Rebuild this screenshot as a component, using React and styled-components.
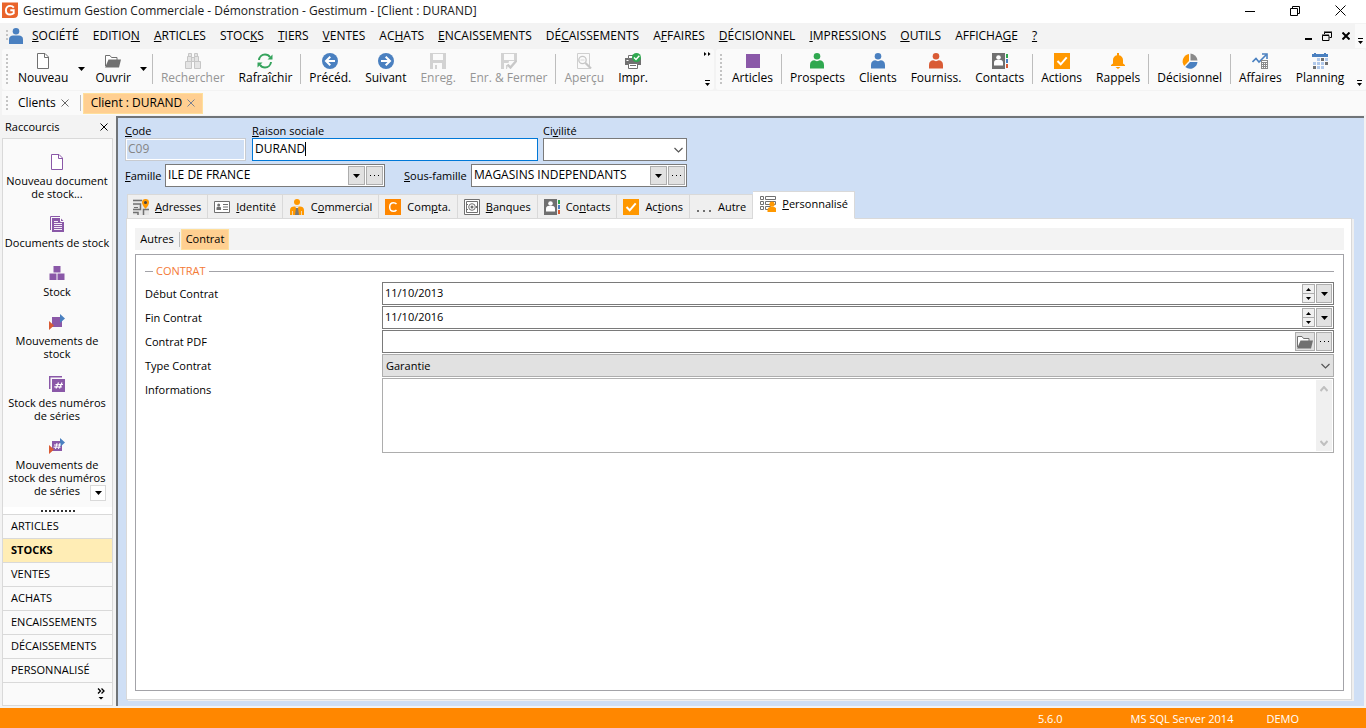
import React from 'react';
import styled, { createGlobalStyle, css } from 'styled-components';

const c = {
  blue: '#cfdff5', bar: '#f3f3f3', panel: '#fafafa', line: '#d9d9d9', gray: '#707070',
  orange: '#ff9800', iconBlue: '#4a80c0', purple: '#8a58a8', green: '#2fa84f', red: '#d95b35',
};

const Global = createGlobalStyle`
  *, *::before, *::after { box-sizing: border-box; }
  body { margin: 0; background: ${c.bar}; }
  body, button, input, select, textarea {
    font-family: "Open Sans", "Noto Sans", sans-serif;
    font-size: 11px; line-height: 16px; color: #000;
  }
  button, input, select, textarea { margin: 0; padding: 0; border-radius: 0; outline: 0; }
  button { border: 0; background: none; white-space: nowrap; }
  svg { display: block; flex: none; }
`;

const Page = styled.div`
  min-height: 100vh; display: flex; flex-direction: column; background: ${c.bar};
`;

/* ---------- window frame ---------- */
const TitleBar = styled.header`
  height: 23px; background: #fff; display: flex; align-items: center; gap: 5px; padding: 0 20px 2px 2px;
  font-size: 12px; color: #1a1a1a;
`;
const Title = styled.h1`margin: 0; font: inherit; flex: 1;`;
const WindowButtons = styled.div`
  display: flex; gap: ${p => p.$gap}px; align-items: center;
`;
const MenuBar = styled.nav`height: 26px; display: flex; align-items: center; padding-left: 6px;`;
const Grip = styled.span`
  width: 2px; height: ${p => p.$h}px; flex: none;
  background: repeating-linear-gradient(#c4c4c4 0 2px, transparent 2px 4px);
`;
const MenuItem = styled.button`font-size: 12px; padding: 0 7px; height: 22px;`;
const MenuList = styled.div`display: flex; flex: 1; padding-left: 1px;`;
const MenuOverflow = styled.button`
  width: 11px; height: 24px; margin-left: 5px; padding: 10px 0 0 2px; background: ${c.panel};
`;

/* ---------- tool bars ---------- */
const ToolBars = styled.div`display: grid; grid-template-columns: 712px 1fr; gap: 2px; padding-left: 2px; height: 41px;`;
const ToolBar = styled.div`
  display: flex; align-items: center; background: ${c.panel}; border-radius: 3px; padding: 0 2px 1px 4px;
`;
const Tools = styled.div`display: flex; flex: 1; align-items: center; padding-left: 3px;`;
const Tool = styled.button`
  display: flex; flex-direction: column; align-items: center; padding: 2px 7px 0; height: 36px; gap: 1px;
  font-size: 12px;
  &:disabled { color: #959595; }
`;
const ToolDrop = styled.button`width: 12px; height: 36px; margin-right: 1px; display: grid; place-items: center;`;
const Sep = styled.span`width: 1px; height: ${p => p.$h || 30}px; background: #bdbdbd; margin: 0 1px; flex: none;`;
const Overflow = styled.button`
  width: 9px; height: 34px; display: flex; flex-direction: column; justify-content: space-between; align-items: center;
`;

/* ---------- document tabs ---------- */
const DocTabs = styled.div`
  height: 24px; margin: 1px 0 0 2px; padding: 0 0 0 4px; display: flex; align-items: center; gap: 1px;
  background: ${c.panel};
`;
const DocTab = styled.div`
  display: flex; align-items: center; gap: 5px; height: 21px; padding: 0 9px;
  ${p => p.$active && css`background: #ffcf91; border: 1px solid #ffdf9c; padding: 0 7px;`}
  button { font-size: 12px; }
`;

/* ---------- body ---------- */
const Body = styled.div`flex: 1; display: flex; min-height: 0;`;
const Side = styled.aside`width: 115px; flex: none; padding: 0 2px 2px; display: flex; flex-direction: column;`;
const SideHead = styled.div`
  height: 23px; display: flex; align-items: center; justify-content: space-between; padding: 0 5px 0 3px;
`;
const SideBox = styled.div`
  flex: 1; display: flex; flex-direction: column; border: 1px solid ${c.line}; background: ${c.panel};
`;
const Shortcuts = styled.div`position: relative; flex: 1; padding-top: 15px;`;
const Shortcut = styled.button`
  width: 100%; display: flex; flex-direction: column; align-items: center; gap: 4px;
  padding: 0 1px 16px 0; line-height: 13px; white-space: pre; text-align: center;
  &:nth-of-type(6) { padding-bottom: 0; }
`;
const ScrollDown = styled.button`
  position: absolute; right: 6px; bottom: 6px; width: 16px; height: 16px; background: #fff;
  border: 1px solid ${c.line}; display: grid; place-items: center;
`;
const Handle = styled.div`
  height: 7px; background: #fff; display: grid; place-items: center;
  &::before {
    content: ''; width: 34px; height: 2px;
    background: repeating-linear-gradient(90deg, #333 0 2px, transparent 2px 4px);
  }
`;
const SideLink = styled.button`
  height: 24px; padding: 0 8px 2px; text-align: left; border-top: 1px solid ${c.line};
  ${p => p.$active && css`background: #ffedb5; font-weight: 700;`}
`;
const SideMore = styled.button`
  height: 23px; border-top: 1px solid ${c.line}; display: flex; justify-content: flex-end;
  align-items: center; padding-right: 7px;
`;
const Main = styled.main`
  flex: 1; min-width: 0; margin: 1px 2px 2px 1px; padding: 6px 10px 6px 7px; background: ${c.blue};
  border: solid #707478; border-width: 2px 0 0 2px; display: flex; flex-direction: column;
`;

/* ---------- fields ---------- */
const Stack = styled.div`display: flex; flex-direction: column; gap: 1px; width: ${p => p.$w}px;`;
const Label = styled.label`line-height: ${p => p.$lh || 13}px; white-space: nowrap;`;
const Box = styled.div`
  position: relative; display: flex; align-items: center; gap: 1px; height: 23px; padding: 0 1px 0 0;
  width: ${p => (p.$w ? p.$w + 'px' : '100%')};
  border: 1px solid ${p => (p.$focus ? '#0078d7' : '#7a7a7a')}; background: #fff;
  ${p => p.$disabled && css`background: ${c.blue}; border-color: #c8cbd0; box-shadow: inset 0 0 0 1px #fff;`}
`;
const Input = styled.input`
  flex: 1; min-width: 0; height: 19px; border: 0; background: none; padding: 0 0 2px 2px;
  font-size: ${p => (p.$size || 12)}px;
  &:disabled { color: #858585; }
`;
const Caret = styled.span`position: absolute; left: 52px; top: 3px; width: 1px; height: 14px; background: #000;`;
const SmallBtn = styled.button`
  width: ${p => p.$w || 17}px; height: 19px; border: 1px solid #adadad; background: #e1e1e1;
  display: grid; place-items: center; flex: none;
`;
const Spin = styled.div`
  display: flex; flex-direction: column; width: 13px;
  button { height: 10px; border: 1px solid #adadad; background: #f0f0f0; display: grid; place-items: center; }
  button + button { margin-top: -1px; }
`;
const Select = styled.select`
  appearance: none; width: 100%; height: 23px; padding: 0 24px 0 3px;
  border: 1px solid ${p => (p.$gray ? '#adadad' : '#7a7a7a')};
  background: ${p => (p.$gray ? '#e1e1e1' : '#fff')};
`;
const SelectWrap = styled.div`
  position: relative;
  svg { position: absolute; right: 4px; top: 9px; pointer-events: none; }
`;
const TopRow = styled.div`display: flex; gap: ${p => p.$gap}px;`;
const SecondRow = styled.div`display: flex; align-items: center; margin-top: 3px; gap: 19px;`;
const Pair = styled.div`display: flex; align-items: center; justify-content: space-between; width: ${p => p.$w}px;`;

/* ---------- page tabs ---------- */
const PageTabs = styled.div`display: flex; align-items: flex-end; margin: 4px 0 -1px 2px; height: 28px; z-index: 1;`;
const PageTab = styled.button`
  display: flex; align-items: center; gap: 6px; height: 25px; padding: 0 6px; background: #efefef;
  border: 1px solid ${c.line}; border-left-width: 0;
  &:first-child { border-left-width: 1px; padding-left: 5px; }
  ${p => p.$active && css`background: #fff; height: 28px; border-bottom-color: #fff; padding: 0 6px 3px 7px;`}
`;
const Pane = styled.section`
  flex: 1; display: flex; flex-direction: column; background: #fff; padding: 9px 7px 8px 8px; margin: 0 2px 0 1px;
  border: 1px solid ${c.line}; box-shadow: 2px 1px 0 #efefef;
`;
const SubTabs = styled.div`height: 22px; background: ${c.bar}; display: flex; align-items: center; padding-left: 1px;`;
const SubTab = styled.button`
  height: 21px; padding: 0 3px; min-width: ${p => (p.$active ? 48 : 42)}px; font-size: 11px;
  ${p => p.$active && css`background: #ffcf91; border: 1px solid #ffdf9c;`}
`;
const Frame = styled.div`flex: 1; margin-top: 4px; border: 1px solid #a3a3a8; padding: 9px;`;
const Group = styled.fieldset`border: 0; margin: 0; padding: 0; min-width: 0;`;
const Legend = styled.legend`
  width: 100%; padding: 0; display: flex; align-items: center; gap: 3px; color: #f47a36; line-height: 14px;
  &::before { content: ''; width: 8px; height: 1px; background: #a3a3a8; }
  &::after { content: ''; flex: 1; height: 1px; background: #a3a3a8; }
`;
const Fields = styled.div`display: flex; flex-direction: column; gap: 1px; margin-top: 4px;`;
const Row = styled.div`display: grid; grid-template-columns: 237px 1fr; align-items: start;`;
const Notes = styled.div`display: flex; height: 75px; border: 1px solid #adadad; padding: 1px; background: #fff;`;
const TextArea = styled.textarea`flex: 1; border: 0; resize: none; overflow: hidden; background: none;`;
const ScrollTrack = styled.div`
  width: 16px; background: #f0f0f0; display: flex; flex-direction: column; justify-content: space-between;
  align-items: center; padding: 6px 0 5px;
`;
const Status = styled.footer`
  height: 20px; background: #ff8700; color: #fff; display: flex; align-items: center; justify-content: flex-end;
  padding: 2px 67px 0 0; gap: 33px;
`;
const Version = styled.span`margin-right: 35px;`;

/* ---------- icons ---------- */
const Svg = ({ w = 16, h = 16, children }) => (
  <svg width={w} height={h} viewBox={`0 0 ${w} ${h}`} fill="none" aria-hidden="true">{children}</svg>
);
const Down = ({ color = '#000' }) => <Svg w={7} h={4}><path d="M0 0h7L3.5 4z" fill={color} /></Svg>;
const TinyArrow = ({ up }) => <Svg w={5} h={3}><path d={up ? 'M0 3h5L2.5 0z' : 'M0 0h5L2.5 3z'} fill="#000" /></Svg>;
const OverflowMark = () => <Svg w={7} h={6}><path d="M1 0h5v1H1zM1 3h5L3.5 6z" fill="#000" /></Svg>;
const DoubleTip = () => <Svg w={7} h={4}><path d="M0 0l2.5 2L0 4zM4 0l2.500 2L4 4z" fill="#000" /></Svg>;
const Chevron = ({ up, color = '#555', w = 9 }) => (
  <Svg w={w} h={6}><path d={up ? `M.5 5L${w / 2} 1l${w / 2 - .5} 4` : `M.5 1L${w / 2} 5l${w / 2 - .5} -4`} stroke={color} strokeWidth={up || color !== '#555' ? 2 : 1.2} /></Svg>
);
const Cross = ({ s = 8, color = '#666', sw = 1 }) => <Svg w={s} h={s}><path d={`M.5 .5l${s - 1} ${s - 1}M${s - .5} .5l-${s - 1} ${s - 1}`} stroke={color} strokeWidth={sw} /></Svg>;
const Dots = () => <Svg w={9} h={2}><path d="M0 0h1v1H0zM4 0h1v1H4zM8 0h1v1H8z" fill="#000" /></Svg>;
const Logo = () => (
  <Svg w={16} h={17}>
    <path d="M0 .5h16v11c0 3-1.500 4.500-4.500 4.500H0z" fill="#e9642b" />
    <path d="M11.800 5.600C10.900 4.400 9.700 3.900 8.200 3.900 5.600 3.900 3.900 5.700 3.900 8.200s1.700 4.300 4.300 4.300c1.300 0 2.600-.4 3.500-1.200V8.200H8.300" stroke="#fff" strokeWidth="1.900" />
  </Svg>
);
const Person = ({ color = c.iconBlue, tall }) => (
  <Svg><circle cx="8" cy="3.300" r="3.300" fill={color} /><path d={tall ? 'M1 16v-4.500C1 8.500 3 7.500 5 7.500h6c2 0 4 1 4 4V16z' : 'M1 15.500V12C1 8.800 3 7.300 5.300 7.300L8 8.300l2.700-1C13 7.300 15 8.800 15 12v3.500z'} fill={color} /></Svg>
);
const NewDoc = ({ color = c.gray }) => (
  <Svg><path d="M2.500 .5h7.500l3.500 3.500v11.500h-11z" stroke={color} fill="#fff" /><path d="M9.500 .5v4h4" stroke={color} /></Svg>
);
const Folder = () => (
  <Svg><path d="M.5 13V2.500h4.500l1.500 2h5.500V7" stroke={c.gray} fill="#fff" /><path d="M0 14.500L3.500 6.500H16l-2 8z" fill={c.gray} /></Svg>
);
const Binoculars = () => (
  <Svg><g fill="#e4e4e4" stroke="#c6c6c6"><path d="M3.500 .5h3v3h-3zM9.500 .5h3v3h-3zM2.500 3.500h4v5h-4zM9.500 3.500h4v5h-4zM6.500 4.500h3v4h-3zM.5 8.500h6v7h-6zM9.500 8.500h6v7h-6z" /></g></Svg>
);
const Refresh = () => (
  <Svg>
    <path d="M2 7c.3-3 2.700-5.500 6-5.500 2.200 0 4 1 5 2.700M14 9c-.3 3-2.700 5.500-6 5.500-2.200 0-4-1-5-2.700" stroke="#35a35c" strokeWidth="2" />
    <path d="M15.500 1.500v5h-5zM.5 14.500v-5h5z" fill="#35a35c" />
  </Svg>
);
const RoundArrow = ({ right }) => (
  <Svg><circle cx="8" cy="8" r="8" fill={c.iconBlue} />
    <g transform={right ? 'matrix(-1 0 0 1 16 0)' : undefined} stroke="#fff" strokeWidth="2"><path d="M13 8H4.500M8.300 3.800L4 8l4.300 4.200" /></g></Svg>
);
const Floppy = ({ check }) => (
  <Svg><path d="M0 0h16v16H0z" fill="#d2d2d2" /><path d="M3 1h10v6H3zM3 10h9v6H3z" fill="#fafafa" /><path d="M5 12h2v4H5z" fill="#d2d2d2" />
    {check && <><path d="M8 8h8v8H6z" fill="#fafafa" /><path d="M6.500 11.500l3 3L15.500 7.500" stroke="#c8c8c8" strokeWidth="2.400" /></>}</Svg>
);
const Preview = () => (
  <Svg><path d="M1.500 .5h12v15h-12z" stroke="#cfcfcf" /><circle cx="6.500" cy="7" r="3.700" stroke="#c6c6c6" strokeWidth="1.300" /><path d="M4.500 7h4" stroke="#d8d8d8" /><path d="M9.500 10l5.500 5.500" stroke="#c6c6c6" strokeWidth="2.200" /></Svg>
);
const Printer = () => (
  <Svg>
    <path d="M0 5h16v7H0z" fill={c.gray} /><path d="M3.500 2.500h5v3h-5z" stroke={c.gray} fill="#fff" />
    <path d="M3.500 10.500h9v5h-9z" stroke={c.gray} fill="#fff" /><path d="M5 12.500h6" stroke={c.gray} /><path d="M1.500 7h2v1h-2z" fill="#fff" />
    <circle cx="11.500" cy="4.500" r="4.500" fill={c.green} /><path d="M9 4.500l2 2 3.300-3.800" stroke="#fff" strokeWidth="1.400" />
  </Svg>
);
const Square = () => <Svg><path d="M1 1h14v14H1z" fill={c.purple} /></Svg>;
const ContactBook = () => (
  <Svg>
    <path d="M0 0h13v16H0z" fill={c.gray} /><circle cx="6.500" cy="4.500" r="2.300" fill="#fff" /><path d="M2 12.500V9.500C2 7.500 3.500 7 5 7h3c1.500 0 3 .5 3 2.500v3z" fill="#fff" />
    <path d="M14 1h2v4h-2z" fill={c.green} /><path d="M14 6h2v4h-2z" fill={c.iconBlue} /><path d="M14 11h2v4h-2z" fill={c.red} />
  </Svg>
);
const CheckBoxIcon = () => <Svg><path d="M0 0h16v16H0z" fill={c.orange} /><path d="M3.500 8l3.200 3.300 6-7" stroke="#fff" strokeWidth="2" /></Svg>;
const Bell = () => (
  <Svg><path d="M7 0h2v2.200c2.500.5 4 2.300 4 4.800v3.500l2 1.500v1H1v-1l2-1.500V7c0-2.500 1.500-4.300 4-4.800zM5.500 14h5L8 16z" fill={c.orange} /></Svg>
);
const Pie = () => (
  <Svg><path d="M7 1v7L2.200 13A7.500 7.500 0 0 1 7 1z" fill={c.orange} /><path d="M8.500 .5A7.500 7.500 0 0 1 15.500 7.500h-7z" fill="#8a8a8a" /><path d="M15.500 9A7.500 7.500 0 0 1 3.300 14L8 9z" fill={c.iconBlue} /></Svg>
);
const Deals = () => (
  <Svg>
    <path d="M.5 9L4 5.500l3 3.500L14.500 1.500" stroke={c.iconBlue} strokeWidth="1.600" /><path d="M10 1h5v5" stroke={c.iconBlue} strokeWidth="1.600" />
    <path d="M9 7h7v9H9z" fill="#8a8a8a" /><path d="M10 8h5v1h-5zM10 10h1v1h-1zM12 10h1v1h-1zM14 10h1v1h-1zM10 12h1v1h-1zM12 12h1v1h-1zM14 12h1v1h-1zM10 14h1v1h-1zM12 14h1v1h-1zM14 14h1v1h-1z" fill="#fff" />
  </Svg>
);
const Calendar = () => (
  <Svg>
    <path d="M0 1h2V0h2v1h8V0h2v1h2v3H0z" fill={c.iconBlue} />
    <path d="M5 5h3v3H5zM13 5h3v3h-3zM1 9h3v3H1zM5 9h3v3H5zM9 9h3v3H9zM5 13h3v3H5zM9 13h3v3H9z" fill="#b0c8ea" />
    <path d="M9 5h3v3H9zM13 9h3v3h-3zM1 13h3v3H1z" fill={c.gray} />
  </Svg>
);
const Docs = () => (
  <Svg>
    <path d="M1.500 14V.5H11" stroke={c.purple} /><path d="M3 2h8.500L15 5.500V16H3z" fill={c.purple} />
    <path d="M11.500 2v3.500H15" stroke="#fff" /><path d="M5 5.500h4M5 7.500h8M5 9.500h8M5 11.500h8M5 13.500h8" stroke="#fff" strokeWidth=".9" />
  </Svg>
);
const Blocks = () => <Svg><path d="M4.500 1h7v6.500h-7zM.5 8.500h7V15h-7zM8.500 8.500h7V15h-7z" fill={c.purple} /></Svg>;
const Moves = ({ hash }) => (
  <Svg>
    <path d="M3 3h10v10H3z" fill={c.purple} /><path d="M0 7l5 4.500L0 16z" fill={c.red} /><path d="M11 0l5 4.500L11 9z" fill={c.iconBlue} />
    {hash && <path d="M6.500 11L8 5M9.500 11L11 5M5 7h7M4.500 9.200h7" stroke="#fff" />}
  </Svg>
);
const Series = () => (
  <Svg><path d="M.5 13V.5H13" stroke={c.purple} strokeWidth="2" /><path d="M3 3h13v13H3z" fill={c.purple} /><path d="M7 12.500l2.500-6M10.500 12.500l2.500-6M6.500 8.500h7.500M5.300 10.800h7.500" stroke="#fff" strokeWidth="1.200" /></Svg>
);
const MapPin = () => (
  <Svg>
    <path d="M0 0h16v16H0z" fill="#e6e6e6" /><path d="M0 1.500h9M0 5h7.500v5.500H0M10.500 16v-5.500H16M5 16v-2.500H0" stroke={c.gray} strokeWidth="1.500" /><path d="M1 8h4v1H1z" fill={c.gray} />
    <path d="M12.500 0A3.500 3.500 0 0 1 16 3.500C16 6 12.500 10 12.500 10S9 6 9 3.500A3.500 3.500 0 0 1 12.500 0z" fill={c.orange} /><circle cx="12.500" cy="3.500" r="1.500" fill="#444" />
  </Svg>
);
const IdCard = () => (
  <Svg>
    <path d="M.5 2.500h15v11H.5z" fill="#fff" stroke={c.gray} /><circle cx="4.700" cy="6" r="1.500" fill={c.gray} /><path d="M2.500 11V9c0-1 1-1.200 2.200-1.200S7 8 7 9v2z" fill={c.gray} />
    <path d="M9 5.500h5M9 8h5M9 10.500h5" stroke={c.gray} />
  </Svg>
);
const SalesMan = () => (
  <Svg><circle cx="8" cy="3" r="3" fill={c.orange} /><path d="M1 16v-5c0-2.500 2-3.500 4-3.500h6c2 0 4 1 4 3.500v5z" fill={c.orange} /><path d="M6 7.500h4L8 10z" fill="#efefef" /><path d="M7 9h2l1 7H6z" fill="#777" /><path d="M3.500 12v4M12.500 12v4" stroke="#efefef" strokeWidth=".7" /></Svg>
);
const LetterC = () => <Svg><path d="M0 0h16v16H0z" fill="#ff8700" /><path d="M11.500 5C10.700 4.100 9.700 3.700 8.600 3.700 6.200 3.700 4.700 5.500 4.700 8s1.500 4.300 3.900 4.300c1.100 0 2.100-.4 2.900-1.300" stroke="#fff" strokeWidth="1.500" /></Svg>;
const Safe = () => (
  <Svg><path d="M.5 .5h15v15H.5zM2.500 2.500h11v11h-11z" fill="#fff" stroke={c.gray} /><circle cx="8" cy="8" r="3.300" stroke={c.gray} /><circle cx="8" cy="8" r="1.500" fill={c.gray} /><path d="M3 5h1v1H3zM3 10h1v1H3zM12 7h1v2h-1z" fill={c.gray} /></Svg>
);
const More = () => <Svg><path d="M1 11h2v2H1zM7 11h2v2H7zM13 11h2v2h-2z" fill={c.gray} /></Svg>;
const CustomForm = () => (
  <Svg>
    <path d="M.5 .5h3v3h-3zM5.500 .5h10v3h-10zM.5 5.500h3v3h-3zM5.500 5.500h10v3h-10zM.5 10.500h3v3h-3zM5.500 10.500h5v3h-5z" stroke={c.gray} />
    <circle cx="12" cy="8.200" r="2.600" fill={c.orange} /><path d="M7.500 16v-2c0-2 1.500-3 3-3h3c1.500 0 3 1 3 3v2z" fill={c.orange} />
  </Svg>
);
const Restore = ({ bold }) => (
  <Svg w={10} h={10}><path d={bold ? 'M2.500 3V1.500H9.500V6.500H7.500M.5 4.500h6.500v5H.5zM2 1h8M0 4h7' : 'M2.500 2.500v-2h7v7h-2M.5 2.500h7v7h-7z'} stroke="#000" /></Svg>
);

/* Caption whose character at `at` is the keyboard mnemonic */
const Key = ({ text, at }) => (at < 0 ? <span>{text}</span> : <span>{text.slice(0, at)}<u>{text[at]}</u>{text.slice(at + 1)}</span>);

const menus = [['SOCIÉTÉ', 0], ['EDITION', 6], ['ARTICLES', 0], ['STOCKS', 4], ['TIERS', 0], ['VENTES', 0], ['ACHATS', 2],
  ['ENCAISSEMENTS', 0], ['DÉCAISSEMENTS', 2], ['AFFAIRES', 1], ['DÉCISIONNEL', 0], ['IMPRESSIONS', 0], ['OUTILS', 0], ['AFFICHAGE', 7], ['?', 0]];

const editTools = [
  { t: 'Nouveau', i: <NewDoc />, drop: true }, { t: 'Ouvrir', i: <Folder />, drop: true }, null,
  { t: 'Rechercher', i: <Binoculars />, off: true }, { t: 'Rafraîchir', i: <Refresh /> }, null,
  { t: 'Précéd.', i: <RoundArrow /> }, { t: 'Suivant', i: <RoundArrow right /> }, { t: 'Enreg.', i: <Floppy />, off: true },
  { t: 'Enr. & Fermer', i: <Floppy check />, off: true }, null,
  { t: 'Aperçu', i: <Preview />, off: true }, { t: 'Impr.', i: <Printer /> },
];
const navTools = [
  { t: 'Articles', i: <Square /> }, null, { t: 'Prospects', i: <Person color={c.green} /> }, { t: 'Clients', i: <Person /> },
  { t: 'Fourniss.', i: <Person color={c.red} /> }, { t: 'Contacts', i: <ContactBook /> }, null, { t: 'Actions', i: <CheckBoxIcon /> },
  { t: 'Rappels', i: <Bell /> }, null, { t: 'Décisionnel', i: <Pie /> }, null, { t: 'Affaires', i: <Deals /> }, { t: 'Planning', i: <Calendar /> },
];
const shortcuts = [
  ['Nouveau document\nde stock...', <NewDoc color={c.purple} />], ['Documents de stock', <Docs />], ['Stock', <Blocks />],
  ['Mouvements de\nstock', <Moves />], ['Stock des numéros\nde séries', <Series />], ['Mouvements de\nstock des numéros\nde séries', <Moves hash />],
];
const sections = ['ARTICLES', 'STOCKS', 'VENTES', 'ACHATS', 'ENCAISSEMENTS', 'DÉCAISSEMENTS', 'PERSONNALISÉ'];
const pageTabs = [['Adresses', 0, <MapPin />], ['Identité', 0, <IdCard />], ['Commercial', 1, <SalesMan />], ['Compta.', 3, <LetterC />],
  ['Banques', 0, <Safe />], ['Contacts', 2, <ContactBook />], ['Actions', 2, <CheckBoxIcon />], ['Autre', -1, <More />], ['Personnalisé', 0, <CustomForm />]];

const ToolGroup = ({ items }) => (
  <Tools>
    {items.map((x, n) => (x === null ? <Sep key={n} /> : (
      <React.Fragment key={n}>
        <Tool disabled={x.off}>{x.i}<span>{x.t}</span></Tool>
        {x.drop && <ToolDrop aria-label={x.t + ' : options'}><Down /></ToolDrop>}
      </React.Fragment>
    )))}
  </Tools>
);

const LookupField = ({ id, w, value }) => (
  <Box $w={w}>
    <Input id={id} defaultValue={value} />
    <SmallBtn aria-label="Liste"><Down /></SmallBtn>
    <SmallBtn aria-label="Parcourir"><Dots /></SmallBtn>
  </Box>
);

const DateField = ({ id, label, value }) => (
  <Row>
    <Label htmlFor={id} $lh={23}>{label}</Label>
    <Box>
      <Input id={id} defaultValue={value} $size={11} />
      <Spin><button aria-label="Plus"><TinyArrow up /></button><button aria-label="Moins"><TinyArrow /></button></Spin>
      <SmallBtn $w={16} aria-label="Calendrier"><Down /></SmallBtn>
    </Box>
  </Row>
);

export default function App() {
  return (
    <Page>
      <Global />
      <TitleBar>
        <Logo />
        <Title>Gestimum Gestion Commerciale - Démonstration - Gestimum - [Client : DURAND]</Title>
        <WindowButtons $gap={35}>
          <button aria-label="Réduire"><Svg w={10} h={10}><path d="M0 5.500h10" stroke="#000" /></Svg></button>
          <button aria-label="Restaurer"><Restore /></button>
          <button aria-label="Fermer"><Cross s={11} color="#000" /></button>
        </WindowButtons>
      </TitleBar>

      <MenuBar>
        <Grip $h={12} />
        <Person tall />
        <MenuList>{menus.map(([t, at]) => <MenuItem key={t}><Key text={t} at={at} /></MenuItem>)}</MenuList>
        <WindowButtons $gap={10}>
          <button aria-label="Réduire le document"><Svg w={7} h={10}><path d="M0 8h7" stroke="#000" strokeWidth="2" /></Svg></button>
          <button aria-label="Restaurer le document"><Restore bold /></button>
          <button aria-label="Fermer le document"><Cross s={8} color="#000" sw={2} /></button>
        </WindowButtons>
        <MenuOverflow aria-label="Options du menu"><OverflowMark /></MenuOverflow>
      </MenuBar>

      <ToolBars>
        <ToolBar>
          <Grip $h={30} /><ToolGroup items={editTools} />
          <Overflow aria-label="Autres boutons"><DoubleTip /><OverflowMark /></Overflow>
        </ToolBar>
        <ToolBar>
          <Grip $h={30} /><ToolGroup items={navTools} />
          <Overflow aria-label="Autres boutons"><span /><OverflowMark /></Overflow>
        </ToolBar>
      </ToolBars>

      <DocTabs>
        <Grip $h={14} />
        <DocTab><button>Clients</button><button aria-label="Fermer Clients"><Cross /></button></DocTab>
        <Sep $h={16} />
        <DocTab $active><button>Client : DURAND</button><button aria-label="Fermer Client : DURAND"><Cross color="#7a8090" /></button></DocTab>
      </DocTabs>

      <Body>
        <Side>
          <SideHead><span>Raccourcis</span><button aria-label="Fermer Raccourcis"><Cross color="#000" /></button></SideHead>
          <SideBox>
            <Shortcuts>
              {shortcuts.map(([t, i]) => <Shortcut key={t}>{i}<span>{t}</span></Shortcut>)}
              <ScrollDown aria-label="Défiler"><Down /></ScrollDown>
            </Shortcuts>
            <Handle />
            {sections.map(s => <SideLink key={s} $active={s === 'STOCKS'}>{s}</SideLink>)}
            <SideMore aria-label="Plus de sections">
              <Svg w={8} h={12}><path d="M1 .5l2.500 2.500L1 5.500M4.500 .5L7 3 4.500 5.500" stroke="#000" strokeWidth="1.300" /><path d="M1.500 9h5L4 11.500z" fill="#000" /></Svg>
            </SideMore>
          </SideBox>
        </Side>

        <Main>
          <TopRow $gap={6}>
            <Stack $w={121}>
              <Label htmlFor="code"><Key text="Code" at={0} /></Label>
              <Box $disabled><Input id="code" disabled defaultValue="C09" /></Box>
            </Stack>
            <TopRow $gap={5}>
              <Stack $w={286}>
                <Label htmlFor="raison"><Key text="Raison sociale" at={0} /></Label>
                <Box $focus><Input id="raison" defaultValue="DURAND" /><Caret /></Box>
              </Stack>
              <Stack $w={144}>
                <Label htmlFor="civilite"><Key text="Civilité" at={2} /></Label>
                <SelectWrap><Select id="civilite"><option /></Select><Chevron /></SelectWrap>
              </Stack>
            </TopRow>
          </TopRow>
          <SecondRow>
            <Pair $w={260}><Label htmlFor="famille"><Key text="Famille" at={0} /></Label><LookupField id="famille" w={220} value="ILE DE FRANCE" /></Pair>
            <Pair $w={283}><Label htmlFor="sous"><Key text="Sous-famille" at={0} /></Label><LookupField id="sous" w={216} value="MAGASINS INDEPENDANTS" /></Pair>
          </SecondRow>

          <PageTabs>
            {pageTabs.map(([t, at, i]) => <PageTab key={t} $active={t === 'Personnalisé'}>{i}<Key text={t} at={at} /></PageTab>)}
          </PageTabs>
          <Pane>
            <SubTabs><SubTab>Autres</SubTab><Sep $h={15} /><SubTab $active>Contrat</SubTab></SubTabs>
            <Frame>
              <Group>
                <Legend>CONTRAT</Legend>
                <Fields>
                  <DateField id="debut" label="Début Contrat" value="11/10/2013" />
                  <DateField id="fin" label="Fin Contrat" value="11/10/2016" />
                  <Row>
                    <Label htmlFor="pdf" $lh={23}>Contrat PDF</Label>
                    <Box>
                      <Input id="pdf" $size={11} />
                      <SmallBtn $w={20} aria-label="Ouvrir"><Folder /></SmallBtn>
                      <SmallBtn $w={16} aria-label="Parcourir"><Dots /></SmallBtn>
                    </Box>
                  </Row>
                  <Row>
                    <Label htmlFor="type" $lh={23}>Type Contrat</Label>
                    <SelectWrap><Select id="type" $gray><option>Garantie</option></Select><Chevron /></SelectWrap>
                  </Row>
                  <Row>
                    <Label htmlFor="infos" $lh={23}>Informations</Label>
                    <Notes>
                      <TextArea id="infos" />
                      <ScrollTrack><Chevron up color="#bfbfbf" w={8} /><Chevron color="#bfbfbf" w={8} /></ScrollTrack>
                    </Notes>
                  </Row>
                </Fields>
              </Group>
            </Frame>
          </Pane>
        </Main>
      </Body>

      <Status><Version>5.6.0</Version><span>MS SQL Server 2014</span><span>DEMO</span></Status>
    </Page>
  );
}
